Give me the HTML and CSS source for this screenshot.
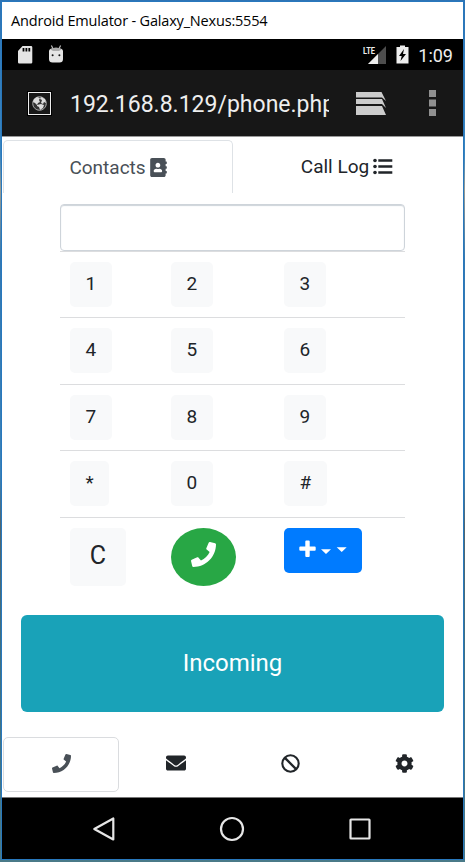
FILE: index.html
```html
<!DOCTYPE html>
<html lang="en">
<head>
<meta charset="utf-8">
<title>Android Emulator - Galaxy_Nexus:5554</title>
<link rel="stylesheet" href="styles.css">
</head>
<body>
<svg class="defs" width="0" height="0">
  <symbol id="phone" viewBox="0 0 512 512"><path d="M493.4 24.6l-104-24c-11.3-2.6-22.9 3.3-27.5 13.9l-48 112c-4.2 9.8-1.4 21.3 6.9 28l60.6 49.6c-36 76.7-98.9 140.5-177.2 177.2l-49.6-60.6c-6.8-8.3-18.2-11.1-28-6.9l-112 48C3.9 366.5-2 378.1.6 389.4l24 104C27.1 504.2 36.7 512 48 512c256.1 0 464-207.5 464-464 0-11.2-7.7-20.9-18.6-23.4z"/></symbol>
</svg>
<div class="window">
  <header class="titlebar"><span>Android Emulator - Galaxy_Nexus:5554</span></header>
  <div class="status">
    <svg width="16" height="19" viewBox="0 0 16 19"><path fill="#e4e4e4" fill-rule="evenodd" d="M5.5 1H14q1.3 0 1.3 1.3v15q0 1.3-1.3 1.3H2.3Q1 18.600 1 17.300V6zM5.600 3v3.500h1.800V3zm2.900 0v3.500h1.800V3zm2.900 0v3.500h1.800V3z"/></svg>
    <svg class="droid" width="16" height="19" viewBox="0 0 16 19"><path d="M3.400.5l1.500 3M12.600.5l-1.500 3" stroke="#bbb" stroke-width="1.200"/><path fill="#e4e4e4" d="M1 6q0-3 7-3t7 3v8q0 3.500-3.500 3.500h-7Q1 17.500 1 14z"/><path fill="#aaa" d="M2.500 4.500Q5 2.500 8 2.500t5.500 2L11 6H5z"/><circle cx="4.600" cy="10.200" r="1" fill="#111"/><circle cx="11.400" cy="10.200" r="1" fill="#111"/></svg>
    <div class="status-right">
      <svg width="25" height="19" viewBox="0 0 25 19"><path fill="#4d4d4d" d="M24 1v18H6z"/><path fill="#eee" d="M16 9v10H6z"/><text x="1" y="8.500" textLength="12" lengthAdjust="spacingAndGlyphs" class="lte">LTE</text></svg>
      <svg class="battery" width="13" height="19" viewBox="0 0 13 19"><path fill="#eee" d="M.5 2H4V.5h5V2h3.500v16.500H.5z"/><path fill="#000" d="M8 4L3 11h2.700L4.500 16l5.500-7H7z"/></svg>
      <span class="clock">1:09</span>
    </div>
  </div>
  <div class="address">
    <svg width="25" height="25" viewBox="0 0 25 25"><rect width="25" height="25" fill="#000"/><rect x="1.500" y="1.500" width="22" height="22" fill="#181818" stroke="#eee"/><circle cx="12.500" cy="12.500" r="6.800" fill="#333" stroke="#aaa"/><path fill="#ddd" d="M7 8l3-2 3 1-1 2 1 2-2 1-1 2-2-2-2-1zM14 6l4 2 1 4-2-1-1 2-2-1 1-3-2-1zM10 14l4-1 3 1-1 3-3 2-1-3-2-1z"/></svg>
    <div class="url">192.168.8.129/phone.php</div>
    <svg class="tabs-icon" width="31" height="23" viewBox="0 0 31 23"><path fill="#ccc" d="M0 0h25.500L30 9l-4-3.500H0zM0 7h26l4 9-4-4H0zM0 14h26l4 9H0z"/></svg>
    <svg class="menu-icon" width="7" height="26" viewBox="0 0 7 26"><path fill="#909090" d="M0 0h7v7H0zM0 9.500h7v7H0zM0 19h7v7H0z"/></svg>
  </div>
  <main class="page">
    <nav class="top-tabs">
      <a class="tab active">Contacts <svg width="17" height="19" viewBox="0 0 448 512"><path d="M436 160c6.600 0 12-5.400 12-12v-40c0-6.600-5.400-12-12-12h-20V48c0-26.500-21.500-48-48-48H48C21.500 0 0 21.500 0 48v416c0 26.500 21.500 48 48 48h320c26.500 0 48-21.500 48-48v-48h20c6.600 0 12-5.400 12-12v-40c0-6.600-5.400-12-12-12h-20v-64h20c6.600 0 12-5.400 12-12v-40c0-6.600-5.400-12-12-12h-20v-64h20zm-228-32c35.300 0 64 28.700 64 64s-28.700 64-64 64-64-28.700-64-64 28.700-64 64-64zm112 236.800c0 10.600-10 19.200-22.400 19.200H118.400C106 384 96 375.400 96 364.800v-19.200c0-31.800 30.100-57.600 67.200-57.600h5c12.300 5.100 25.700 8 39.800 8s27.600-2.900 39.800-8h5c37.100 0 67.200 25.800 67.200 57.600v19.200z"/></svg></a>
      <a class="tab">Call Log <svg width="20" height="19" viewBox="0 0 20 19"><circle cx="2" cy="3.500" r="1.800"/><circle cx="2" cy="9.500" r="1.800"/><circle cx="2" cy="15.500" r="1.800"/><path d="M5.300 2.300h14v2.400h-14zM5.300 8.300h14v2.400h-14zM5.300 14.300h14v2.400h-14z"/></svg></a>
    </nav>
    <section class="dialer">
      <input class="number" type="text" aria-label="Number">
      <div class="row"><div><button>1</button></div><div><button>2</button></div><div><button>3</button></div></div>
      <div class="row"><div><button>4</button></div><div><button>5</button></div><div><button>6</button></div></div>
      <div class="row"><div><button>7</button></div><div><button>8</button></div><div><button>9</button></div></div>
      <div class="row"><div><button>*</button></div><div><button>0</button></div><div><button>#</button></div></div>
      <div class="row last">
        <div><button class="clear">C</button></div>
        <div><button class="call" aria-label="Call"><svg width="25" height="25"><use href="#phone"/></svg></button></div>
        <div><button class="add" aria-label="Add"><svg width="49" height="18" viewBox="0 0 49 18"><path d="M6.300 1.500q0-1 1-1h2.400q1 0 1 1v5h5q1 0 1 1v2.300q0 1-1 1h-5v5.200q0 1-1 1H7.300q-1 0-1-1v-5.200h-5q-1 0-1-1V7.500q0-1 1-1h5zM22 9.200h10l-5 4.700zM37.700 7.300h10l-5 4.700z"/></svg></button></div>
      </div>
    </section>
    <button class="incoming">Incoming</button>
    <nav class="bottom-tabs">
      <a class="active"><svg width="19" height="19"><use href="#phone"/></svg></a>
      <a><svg width="20" height="20" viewBox="0 0 512 512"><path d="M502.300 190.800c3.900-3.100 9.700-.2 9.700 4.700V400c0 26.500-21.500 48-48 48H48c-26.500 0-48-21.500-48-48V195.600c0-5 5.700-7.800 9.700-4.700 22.400 17.400 52.100 39.500 154.100 113.600 21.100 15.400 56.700 47.800 92.200 47.600 35.700.3 72-32.800 92.300-47.600 102-74.100 131.600-96.300 154-113.700zM256 320c23.200.4 56.600-29.200 73.400-41.400 132.700-96.300 142.800-104.700 173.400-128.700 5.800-4.500 9.200-11.500 9.200-18.900v-19c0-26.500-21.500-48-48-48H48c-26.500 0-48 21.500-48 48v19c0 7.400 3.400 14.300 9.200 18.900 30.600 23.900 40.700 32.400 173.400 128.700 16.800 12.200 50.200 41.800 73.400 41.400z"/></svg></a>
      <a><svg width="19" height="19" viewBox="0 0 19 19"><circle cx="9.500" cy="9.500" r="8.200" fill="none" stroke="#212529" stroke-width="2.100"/><path d="M3.900 3.900l11.200 11.200" stroke="#212529" stroke-width="2.300"/></svg></a>
      <a><svg width="19" height="19" viewBox="0 0 512 512"><path d="M487.400 315.700l-42.600-24.600c4.300-23.200 4.300-47 0-70.200l42.600-24.600c4.900-2.800 7.100-8.600 5.500-14-11.100-35.600-30-67.800-54.700-94.600-3.800-4.100-10-5.100-14.800-2.300L380.800 110c-17.900-15.400-38.500-27.300-60.800-35.100V25.800c0-5.600-3.900-10.500-9.400-11.700-36.700-8.200-74.300-7.800-109.200 0-5.500 1.200-9.400 6.100-9.400 11.700V75c-22.200 7.900-42.800 19.800-60.800 35.100L88.700 85.500c-4.900-2.800-11-1.900-14.800 2.300-24.700 26.700-43.600 58.900-54.700 94.600-1.700 5.400.6 11.200 5.500 14L67.300 221c-4.300 23.200-4.300 47 0 70.200l-42.600 24.600c-4.900 2.800-7.100 8.600-5.500 14 11.100 35.600 30 67.800 54.700 94.600 3.800 4.100 10 5.100 14.800 2.300l42.600-24.600c17.900 15.400 38.500 27.300 60.800 35.100v49.200c0 5.600 3.900 10.500 9.400 11.700 36.700 8.200 74.300 7.800 109.200 0 5.500-1.200 9.400-6.100 9.400-11.700v-49.200c22.200-7.900 42.800-19.800 60.800-35.100l42.600 24.600c4.900 2.800 11 1.900 14.800-2.300 24.700-26.700 43.600-58.900 54.700-94.600 1.500-5.500-.7-11.300-5.600-14.100zM256 336c-44.100 0-80-35.900-80-80s35.900-80 80-80 80 35.900 80 80-35.900 80-80 80z"/></svg></a>
    </nav>
  </main>
  <footer class="softkeys">
    <svg width="26" height="26" viewBox="0 0 26 26"><path d="M22.300 2.500v21L3.300 13z"/></svg>
    <svg width="26" height="26" viewBox="0 0 26 26"><circle cx="13" cy="13" r="11"/></svg>
    <svg width="26" height="26" viewBox="0 0 26 26"><rect x="3.500" y="3.500" width="19" height="19" rx=".5"/></svg>
  </footer>
</div>
</body>
</html>
```
FILE: styles.css
```css
* { box-sizing: border-box; }
body {
  margin: 0;
  height: 862px;
  padding: 1px 1px 2px;
  overflow: hidden;
  background: linear-gradient(#2e74b5 0, #3a86c0 18%, #9a9c93 22%, #3479b2 30%, #3b82b8 55%, #51666f 61%, #3f7184 75%, #4a7a88 100%);
  font-family: Roboto, sans-serif;
}
.defs { display: block; position: absolute; }
.window {
  height: 859px;
  border: 1px solid #2878bd;
  display: flex;
  flex-direction: column;
  background: #fff;
}
.titlebar {
  height: 37px;
  padding: 0 9px;
  display: flex;
  align-items: center;
  font: 14.500px "Open Sans", "Noto Sans", sans-serif;
  letter-spacing: -.18px;
  color: #000;
  white-space: nowrap;
}
.status {
  height: 31px;
  background: #000;
  display: flex;
  align-items: center;
  padding: 0 10px 0 15px;
}
.droid { margin-left: 15px; }
.status-right { margin-left: auto; display: flex; align-items: center; }
.lte { font: bold 9px Roboto, sans-serif; fill: #eee; }
.battery { margin-left: 9px; }
.clock { margin-left: 9px; padding-top: 1px; font-size: 18px; color: #eee; }
.address {
  height: 66px;
  background: #171717;
  display: flex;
  align-items: center;
  padding-left: 25px;
}
.url {
  width: 259px;
  margin-left: 18px;
  padding-top: 2px;
  overflow: hidden;
  white-space: nowrap;
  font-size: 23px;
  color: #eee;
}
.tabs-icon { margin-left: 27px; }
.menu-icon { margin-left: 42px; }
.page {
  height: 662px;
  border-top: 1px solid #999;
  border-bottom: 1px solid #777;
  display: flex;
  flex-direction: column;
  font-size: 19px;
  color: #212529;
}
.page svg { fill: currentColor; }
.top-tabs { display: flex; height: 53px; margin: 3px 2px 0 1px; }
.tab {
  flex: 1;
  display: flex;
  justify-content: center;
  align-items: center;
  gap: 4px;
}
.top-tabs .active {
  border: 1.5px solid #dee2e6;
  border-bottom: 0;
  border-radius: 5px 5px 0 0;
  color: #495057;
}
.dialer { margin: 11px 58px 0; }
.number {
  display: block;
  width: 100%;
  height: 46.500px;
  border: 1px solid #ced4da;
  border-radius: 4px;
  box-shadow: inset 0 1px 1px #ced4da;
  outline: 0;
}
.row {
  height: 66.600px;
  border-top: 1px solid #dcdddf;
  padding: 10px 0 0 10px;
  display: grid;
  grid-template-columns: 101px 113px 1fr;
}
.row.last { height: 98.100px; }
button {
  height: 45px;
  padding: 0 15.600px;
  border: 0;
  border-radius: 5px;
  background: #f8f9fa;
  font: 19px Roboto, sans-serif;
  color: #212529;
}
.row button { display: flex; align-items: center; justify-content: center; padding-bottom: 2px; }
.row .clear, .row .call { width: 56px; height: 58px; font-size: 25px; }
.row .call { width: 65px; padding: 0 0 4px; border-radius: 50%; background: #28a745; color: #fff; }
.row .add { width: 78px; padding: 0 0 2px; background: #007bff; color: #fff; }
.incoming {
  height: 97px;
  flex: none;
  margin: 0 19px;
  border-radius: 6px;
  background: #19a2b8;
  color: #fff;
  font-size: 24px;
}
.bottom-tabs { display: flex; height: 55px; margin: 25px 2px 0 1px; }
.bottom-tabs a {
  flex: 1;
  display: flex;
  align-items: center;
  justify-content: center;
  padding-bottom: 2px;
}
.bottom-tabs .active {
  padding-bottom: 1px;
  border: 1px solid #dadcdf;
  border-radius: 5px;
  color: #495057;
}
.softkeys {
  height: 61px;
  padding-right: 1px;
  background: #000;
  display: flex;
  justify-content: center;
  align-items: center;
  gap: 102px;
}
.softkeys svg { fill: none; stroke: #e6e6e6; stroke-width: 2.200; stroke-linejoin: round; }
```
